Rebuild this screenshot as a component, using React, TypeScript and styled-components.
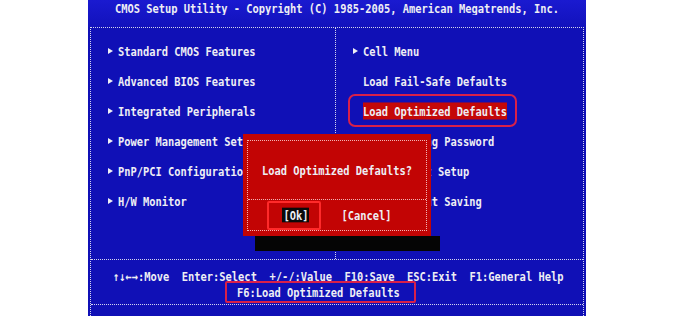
import styled, { createGlobalStyle, css } from 'styled-components';

const GlobalStyle = createGlobalStyle`
  html, body {
    margin: 0;
    padding: 0;
    background: #ffffff;
  }
  body {
    width: 676px;
    height: 316px;
    overflow: hidden;
  }
`;

const leftItems = [
  'Standard CMOS Features',
  'Advanced BIOS Features',
  'Integrated Peripherals',
  'Power Management Setup',
  'PnP/PCI Configurations',
  'H/W Monitor',
];

const rightItems = [
  { label: 'Cell Menu', arrow: true },
  { label: 'Load Fail-Safe Defaults' },
  { label: 'Load Optimized Defaults', selected: true },
  { label: 'BIOS Setting Password' },
  { label: 'Save & Exit Setup' },
  { label: 'Exit Without Saving' },
];

export default function App() {
  return (
    <>
      <GlobalStyle />
      <Page>
        <Screen>
          <TitleBar>
            <Text>CMOS Setup Utility - Copyright (C) 1985-2005, American Megatrends, Inc.</Text>
          </TitleBar>

          <Frame>
            <MenuGrid>
              <Column $divider>
                {leftItems.map((item) => (
                  <MenuItem key={item}>
                    <Arrow />
                    <Text>{item}</Text>
                  </MenuItem>
                ))}
              </Column>
              <Column>
                {rightItems.map((item) => (
                  <MenuItem key={item.label}>
                    {item.arrow ? <Arrow /> : <ArrowSpace />}
                    <Text $selected={item.selected}>{item.label}</Text>
                  </MenuItem>
                ))}
              </Column>
            </MenuGrid>

            {/* key help */}
            <HelpBar>
              <HelpLine $indent={22}>
                <Text>{'↑↓←→:Move  Enter:Select  +/-/:Value  F10:Save  ESC:Exit  F1:General Help'}</Text>
              </HelpLine>
              <HelpLine $indent={146}>
                <Text>F6:Load Optimized Defaults</Text>
              </HelpLine>
            </HelpBar>
            <StatusStrip />
          </Frame>

          {/* confirm dialog */}
          <Dialog>
            <DialogInner>
              <DialogQuestion>
                <Text>Load Optimized Defaults?</Text>
              </DialogQuestion>
              <DialogButtons>
                <Text $active>[Ok]</Text>
                <Text>[Cancel]</Text>
              </DialogButtons>
            </DialogInner>
          </Dialog>

          {/* red annotation boxes */}
          <Marker $left={260} $top={94} $width={169} $height={33} $radius={7} />
          <Marker $left={179} $top={201} $width={54} $height={29} $radius={2} $bright />
          <Marker $left={137} $top={281} $width={191} $height={22} $radius={2} />
        </Screen>
      </Page>
    </>
  );
}

const Page = styled.div`
  width: 676px;
  height: 316px;
  display: flex;
  background: #ffffff;
`;

const Screen = styled.div`
  position: relative;
  margin-left: 88px;
  width: 498px;
  height: 316px;
  display: flex;
  flex-direction: column;
  background: #1010b6;
  color: #eeeef4;
  font-family: 'DejaVu Sans Mono', 'Liberation Mono', monospace;
  font-size: 10.4px;
  font-weight: bold;
  white-space: pre;
`;

const Text = styled.span`
  display: inline-block;
  line-height: 12px;
  transform: scaleY(1.22);
  ${({ $selected }) =>
    $selected &&
    css`
      background: #c40808;
      padding: 1px 0;
    `}
  ${({ $active }) =>
    $active &&
    css`
      background: #0a0a0a;
      padding: 0 1px;
    `}
`;

const TitleBar = styled.div`
  height: 27px;
  display: flex;
  justify-content: center;
  padding-top: 3px;
  box-sizing: border-box;
  background: linear-gradient(#1a1ad0, #1212bc);
`;

const Frame = styled.div`
  flex: 1;
  margin: 0 2px;
  display: flex;
  flex-direction: column;
  border: 1px dotted #d4d4ee;
  border-bottom: none;
`;

const MenuGrid = styled.div`
  height: 231px;
  display: grid;
  grid-template-columns: 245px 1fr;
`;

const Column = styled.div`
  display: flex;
  flex-direction: column;
  padding-top: 8px;
  box-sizing: border-box;
  ${({ $divider }) =>
    $divider &&
    css`
      border-right: 1px dotted #d4d4ee;
    `}
`;

const MenuItem = styled.div`
  height: 30px;
  display: flex;
  align-items: center;
  padding-left: 17px;
`;

const Arrow = styled.span`
  width: 0;
  height: 0;
  margin-right: 5px;
  border-left: 5px solid #eeeef4;
  border-top: 3.5px solid transparent;
  border-bottom: 3.5px solid transparent;
`;

const ArrowSpace = styled.span`
  width: 10px;
`;

const HelpBar = styled.div`
  height: 46px;
  padding-top: 8px;
  box-sizing: border-box;
  border-top: 1px dotted #d4d4ee;
  border-bottom: 1px dotted #d4d4ee;
`;

const HelpLine = styled.div`
  height: 16px;
  display: flex;
  align-items: center;
  padding-left: ${({ $indent }) => $indent}px;
`;

const StatusStrip = styled.div`
  flex: 1;
`;

const Dialog = styled.div`
  position: absolute;
  left: 155px;
  top: 134px;
  width: 188px;
  height: 102px;
  padding: 6px 4px 5px;
  box-sizing: border-box;
  background: #c20404;
  &::after {
    content: '';
    position: absolute;
    top: 100%;
    left: 12px;
    right: -9px;
    height: 15px;
    background: #050505;
  }
`;

const DialogInner = styled.div`
  height: 100%;
  display: flex;
  flex-direction: column;
  border: 1px dotted #f2b4b4;
  box-sizing: border-box;
`;

const DialogQuestion = styled.div`
  height: 58px;
  display: flex;
  align-items: center;
  justify-content: center;
  border-bottom: 1px dotted #f2b4b4;
`;

const DialogButtons = styled.div`
  flex: 1;
  display: flex;
  align-items: center;
  justify-content: center;
  gap: 32px;
`;

const Marker = styled.div`
  position: absolute;
  left: ${({ $left }) => $left}px;
  top: ${({ $top }) => $top}px;
  width: ${({ $width }) => $width}px;
  height: ${({ $height }) => $height}px;
  box-sizing: border-box;
  border: 2px solid ${({ $bright }) => ($bright ? '#ff2a2a' : '#d8204a')};
  border-radius: ${({ $radius }) => $radius}px;
`;
